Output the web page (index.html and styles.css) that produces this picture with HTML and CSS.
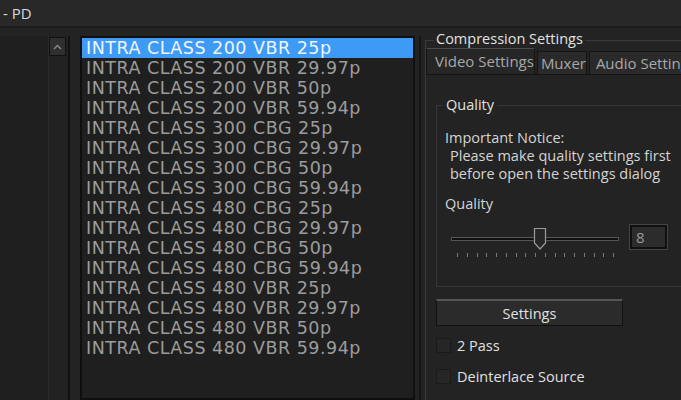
FILE: index.html
```html
<!DOCTYPE html>
<html lang="en">
<head>
    <meta charset="UTF-8">
    <title>PD</title>
    <link rel="stylesheet" href="styles.css">
</head>
<body>
    <div class="titlebar">- PD</div>

    <div class="main">
        <div class="tree-pane">
            <div class="tree"></div>
            <div class="scrollbar">
                <div class="scroll-up">
                    <svg width="9" height="6" viewBox="0 0 9 6"><path d="M1 5 L4.5 1.5 L8 5" fill="none" stroke="#8a8a8a" stroke-width="1.4"/></svg>
                </div>
            </div>
        </div>

        <ul class="preset-list">
            <li class="selected">INTRA CLASS 200 VBR 25p</li>
            <li>INTRA CLASS 200 VBR 29.97p</li>
            <li>INTRA CLASS 200 VBR 50p</li>
            <li>INTRA CLASS 200 VBR 59.94p</li>
            <li>INTRA CLASS 300 CBG 25p</li>
            <li>INTRA CLASS 300 CBG 29.97p</li>
            <li>INTRA CLASS 300 CBG 50p</li>
            <li>INTRA CLASS 300 CBG 59.94p</li>
            <li>INTRA CLASS 480 CBG 25p</li>
            <li>INTRA CLASS 480 CBG 29.97p</li>
            <li>INTRA CLASS 480 CBG 50p</li>
            <li>INTRA CLASS 480 CBG 59.94p</li>
            <li>INTRA CLASS 480 VBR 25p</li>
            <li>INTRA CLASS 480 VBR 29.97p</li>
            <li>INTRA CLASS 480 VBR 50p</li>
            <li>INTRA CLASS 480 VBR 59.94p</li>
        </ul>

        <div class="settings-pane">
            <div class="group">
                <div class="group-title">Compression Settings</div>
                <div class="tabs">
                    <div class="tab tab-video active">Video Settings</div>
                    <div class="tab tab-muxer">Muxer</div>
                    <div class="tab tab-audio">Audio Settings</div>
                </div>
                <div class="tab-body">
                    <div class="quality-box">
                        <div class="quality-title">Quality</div>
                        <div class="notice">
                            <div>Important Notice:</div>
                            <div class="notice-text">Please make quality settings first</div>
                            <div class="notice-text">before open the settings dialog</div>
                        </div>
                        <div class="quality-label">Quality</div>
                        <div class="slider-row">
                            <div class="slider">
                                <div class="track"></div>
                                <svg class="thumb" width="14" height="24" viewBox="0 0 14 24"><path d="M1.5 1.5 H12.5 V16 L7 22 L1.5 16 Z" fill="#262626" stroke="#9a9a9a" stroke-width="1.2"/></svg>
                                <div class="ticks">
                                    <span></span><span></span><span></span><span></span><span></span><span></span><span></span><span></span><span></span><span></span><span></span><span></span><span></span><span></span><span></span><span></span><span></span>
                                </div>
                            </div>
                            <div class="value-box">8</div>
                        </div>
                    </div>
                    <button class="settings-btn">Settings</button>
                    <label class="check check-first"><span class="box"></span>2 Pass</label>
                    <label class="check"><span class="box"></span>Deinterlace Source</label>
                </div>
            </div>
        </div>
    </div>
</body>
</html>
```

FILE: styles.css
```css
body {
    margin: 0;
    width: 681px;
    height: 400px;
    overflow: hidden;
    background-color: #232323;
    font-family: "Open Sans", "Noto Sans", sans-serif;
    color: #cfcfcf;
}
.titlebar {
    height: 26px;
    padding-left: 3px;
    font-size: 15px;
    line-height: 26px;
    color: #d8d8d8;
    background-color: #282828;
    border-bottom: 2px solid #1b1b1b;
}
.main {
    display: flex;
    padding-top: 8px;
    height: 364px;
    overflow: hidden;
}
.tree-pane {
    display: flex;
    flex-shrink: 0;
    width: 68px;
    border-right: 2px solid #111;
    background-color: #1f1f1f;
}
.tree {
    width: 49px;
}
.scrollbar {
    width: 19px;
    background-color: #222;
    border-left: 1px solid #2a2a2a;
}
.scroll-up {
    display: flex;
    align-items: center;
    justify-content: center;
    width: 15px;
    height: 17px;
    margin-top: 1px;
    background-color: #2f2f2f;
    border: 1px solid #111;
}
.preset-list {
    flex-shrink: 0;
    list-style: none;
    margin: 0 0 0 10px;
    padding: 0;
    width: 331px;
    background-color: #1f1f1f;
    border: 2px solid #0f0f0f;
    font-family: "DejaVu Sans", sans-serif;
    font-size: 17.5px;
    letter-spacing: 0.5px;
}
.preset-list li {
    height: 20px;
    line-height: 20px;
    padding-left: 4px;
    color: #9c9c9c;
    white-space: nowrap;
}
.preset-list li.selected {
    background-color: #3e9bf5;
    color: #eef5ff;
}
.settings-pane {
    flex: 1;
    min-width: 0;
    margin-left: 4px;
    border-left: 2px solid #151515;
    padding-left: 4px;
}
.group {
    position: relative;
    margin-top: 4px;
    border-top: 1px solid #3a3a3a;
    border-left: 1px solid #3a3a3a;
}
.group-title {
    position: absolute;
    top: -11px;
    left: 8px;
    padding: 0 2px;
    font-size: 14.5px;
    line-height: 18px;
    color: #e2e2e2;
    background-color: #232323;
}
.tabs {
    display: flex;
    align-items: flex-end;
    gap: 2px;
    height: 26px;
    margin-top: 7px;
    white-space: nowrap;
    overflow: hidden;
}
.tab {
    height: 23px;
    font-size: 15px;
    line-height: 23px;
    color: #a8a8a8;
    background-color: #2a2a2a;
    border: 1px solid #141414;
    border-bottom: none;
    box-sizing: border-box;
}
.tab.active {
    height: 26px;
    line-height: 25px;
    background-color: #262626;
    border-top: 1px solid #4a4a4a;
}
.tab-video {
    width: 117px;
    padding-left: 8px;
}
.tab-muxer {
    width: 50px;
    padding-left: 3px;
}
.tab-audio {
    flex: 1;
    padding-left: 6px;
}
.tab-body {
    height: 300px;
    padding: 30px 0 0 10px;
    border-top: 1px solid #141414;
    background-color: #232323;
}
.quality-box {
    position: relative;
    box-sizing: border-box;
    height: 182px;
    padding: 23px 0 0 8px;
    border: 1px solid #363636;
    border-right: none;
    font-size: 14.5px;
}
.quality-title {
    position: absolute;
    top: -10px;
    left: 6px;
    padding: 0 3px;
    line-height: 18px;
    color: #e0e0e0;
    background-color: #232323;
}
.notice {
    line-height: 18px;
    color: #d4d4d4;
}
.notice-text {
    padding-left: 5px;
}
.quality-label {
    margin-top: 12px;
    line-height: 18px;
    color: #d4d4d4;
}
.slider-row {
    display: flex;
    align-items: flex-start;
    margin-top: 14px;
}
.slider {
    position: relative;
    width: 174px;
    height: 34px;
    margin-left: 6px;
}
.track {
    position: absolute;
    top: 10px;
    left: 0;
    width: 166px;
    height: 2px;
    background-color: #111;
    border: 1px solid #555;
}
.thumb {
    position: absolute;
    top: 0;
    left: 82px;
}
.ticks {
    position: absolute;
    top: 26px;
    left: 6px;
    width: 157px;
    display: flex;
    justify-content: space-between;
}
.ticks span {
    width: 1px;
    height: 4px;
    background-color: #7a7a7a;
}
.value-box {
    width: 29px;
    height: 20px;
    margin: -2px 0 0 5px;
    padding-left: 4px;
    font-size: 15px;
    line-height: 20px;
    color: #9a9a9a;
    background-color: #2c2c2c;
    border: 2px solid #101010;
    outline: 1px solid #444;
}
.settings-btn {
    display: block;
    width: 187px;
    height: 27px;
    margin-top: 12px;
    font-family: "Open Sans", "Noto Sans", sans-serif;
    font-size: 14.5px;
    color: #e0e0e0;
    background-color: #2b2b2b;
    border: 1px solid #111;
    border-top: 2px solid #555;
}
.check {
    display: flex;
    align-items: center;
    gap: 6px;
    height: 31px;
    font-size: 14.5px;
    color: #e0e0e0;
}
.check-first {
    margin-top: 4px;
}
.box {
    width: 13px;
    height: 13px;
    background-color: #262626;
    border: 1px solid #1a1a1a;
}
```
